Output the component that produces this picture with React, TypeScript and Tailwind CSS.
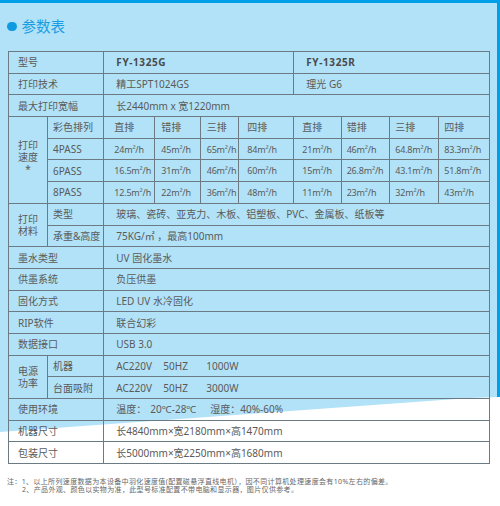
const speedHead = ['直排', '错排', '三排', '四排', '直排', '错排', '三排', '四排']

const speedRows = [
  { pass: '4PASS', v: ['24', '45', '65', '84', '21', '46', '64.8', '83.3'] },
  { pass: '6PASS', v: ['16.5', '31', '46', '60', '15', '26.8', '43.1', '51.8'] },
  { pass: '8PASS', v: ['12.5', '22', '36', '48', '11', '23', '32', '43'] },
]

// left padding per speed column, measured from the reference
const padCls = ['pl-[10px]', 'pl-[6px]', 'pl-[6px]', 'pl-[8px]', 'pl-[8px]', 'pl-[5px]', 'pl-[5px]', 'pl-[5px]']

const simpleRows: [string, React.ReactNode][] = [
  ['墨水类型', 'UV 固化墨水'],
  ['供墨系统', '负压供墨'],
  ['固化方式', 'LED UV 水冷固化'],
  ['RIP软件', '联合幻彩'],
  ['数据接口', 'USB 3.0'],
]

const bd = 'border border-[#6c7a84]'
const rowH = 'h-[21.7px]'

function Label({ children, span = 2 }: { children: React.ReactNode; span?: number }) {
  return (
    <td colSpan={span} className={`${bd} ${rowH} pl-[9px] p-0 align-middle`}>
      {children}
    </td>
  )
}

function Value({ children, span = 8, bold = false }: { children: React.ReactNode; span?: number; bold?: boolean }) {
  return (
    <td colSpan={span} className={`${bd} ${rowH} pl-[12px] p-0 align-middle ${bold ? 'font-bold tracking-[0.6px] text-[#4a4a4a]' : ''}`}>
      {children}
    </td>
  )
}

function Stack({ lines }: { lines: string[] }) {
  return (
    <div className="flex flex-col items-center leading-[12px]">
      {lines.map((l, i) => (
        <span key={i}>{l}</span>
      ))}
    </div>
  )
}

function Power({ w }: { w: string }) {
  return (
    <>
      <span className="inline-block w-[47px]">AC220V</span>
      <span className="inline-block w-[43px]">50HZ</span>
      <span>{w}</span>
    </>
  )
}

export default function App() {
  return (
    <div className="relative h-[506px] w-[500px] overflow-hidden bg-white font-['Noto_Sans','Noto_Sans_CJK_SC',sans-serif] text-[#5a5a5a]">
      {/* background: light blue panel with slanted bottom edge, blue frame bars */}
      <svg className="absolute inset-0" width="500" height="506" aria-hidden>
        <polygon points="0,0 500,0 500,397 470,398 0,432" fill="#b2e2f7" />
        <rect x="0" y="0" width="500" height="3" fill="#00a0e9" />
        <rect x="497" y="0" width="3" height="397" fill="#00a0e9" />
      </svg>

      <div className="relative">
        <div className="flex h-[51px] items-start gap-[5px] pl-[7px] pt-[19px]">
          <span className="mt-[2.5px] h-[9.5px] w-[9.5px] rounded-full bg-[#0f9be2]" />
          <span className="text-[14.5px] leading-[15px] text-[#1a9de2]">参数表</span>
        </div>

        <table className="ml-[8px] w-[481.3px] table-fixed border-collapse text-[10px] leading-none">
          <colgroup>
            <col className="w-[39px]" />
            <col className="w-[56.3px]" />
            <col className="w-[51px]" />
            <col className="w-[45.4px]" />
            <col className="w-[38.6px]" />
            <col className="w-[55px]" />
            <col className="w-[47.4px]" />
            <col className="w-[48.6px]" />
            <col className="w-[49px]" />
            <col className="w-[51px]" />
          </colgroup>
          <tbody>
            <tr>
              <Label>型号</Label>
              <Value span={4} bold>FY-1325G</Value>
              <Value span={4} bold>FY-1325R</Value>
            </tr>
            <tr>
              <Label>打印技术</Label>
              <Value span={4}>精工SPT1024GS</Value>
              <Value span={4}>理光 G6</Value>
            </tr>
            <tr>
              <Label>最大打印宽幅</Label>
              <Value>长2440mm x 宽1220mm</Value>
            </tr>

            <tr>
              <td rowSpan={4} className={`${bd} p-0 pb-[6px] align-middle`}>
                <Stack lines={['打印', '速度', '*']} />
              </td>
              <td className={`${bd} ${rowH} p-0 pl-[5px]`}>彩色排列</td>
              {speedHead.map((h, i) => (
                <td key={i} className={`${bd} ${rowH} p-0 ${padCls[i]}`}>{h}</td>
              ))}
            </tr>
            {speedRows.map((r) => (
              <tr key={r.pass}>
                <td className={`${bd} ${rowH} p-0 pl-[5px]`}>{r.pass}</td>
                {r.v.map((v, i) => (
                  <td key={i} className={`${bd} ${rowH} p-0 text-[9px] tracking-[-0.2px] ${padCls[i]}`}>
                    {v}m²/h
                  </td>
                ))}
              </tr>
            ))}

            <tr>
              <td rowSpan={2} className={`${bd} p-0 align-middle`}>
                <Stack lines={['打印', '材料']} />
              </td>
              <td className={`${bd} ${rowH} p-0 pl-[5px]`}>类型</td>
              <Value>玻璃、瓷砖、亚克力、木板、铝塑板、PVC、金属板、纸板等</Value>
            </tr>
            <tr>
              <td className={`${bd} ${rowH} p-0 pl-[5px]`}>承重&amp;高度</td>
              <Value>75KG/㎡ ，最高100mm</Value>
            </tr>

            {simpleRows.map(([k, v]) => (
              <tr key={k}>
                <Label>{k}</Label>
                <Value>{v}</Value>
              </tr>
            ))}

            <tr>
              <td rowSpan={2} className={`${bd} p-0 align-middle`}>
                <Stack lines={['电源', '功率']} />
              </td>
              <td className={`${bd} ${rowH} p-0 pl-[5px]`}>机器</td>
              <Value><Power w="1000W" /></Value>
            </tr>
            <tr>
              <td className={`${bd} ${rowH} p-0 pl-[5px]`}>台面吸附</td>
              <Value><Power w="3000W" /></Value>
            </tr>

            <tr>
              <Label>使用环境</Label>
              <Value>
                <span className="inline-block w-[34px]">温度：</span>
                <span className="inline-block w-[60px]">20℃-28℃</span>
                <span>湿度：40%-60%</span>
              </Value>
            </tr>
            <tr>
              <Label>机器尺寸</Label>
              <Value>长4840mm×宽2180mm×高1470mm</Value>
            </tr>
            <tr>
              <Label>包装尺寸</Label>
              <Value>长5000mm×宽2250mm×高1680mm</Value>
            </tr>
          </tbody>
        </table>

        <div className="mt-[14px] pl-[7px] text-[7px] leading-[7.5px] tracking-[0.35px] text-[#666]">
          <p>注：1、以上所列速度数据为本设备中羽化速度值(配置磁悬浮直线电机），因不同计算机处理速度会有10%左右的偏差。</p>
          <p className="pl-[15px]">2、产品外观、颜色以实物为准，此型号标准配置不带电脑和显示器，图片仅供参考。</p>
        </div>
      </div>
    </div>
  )
}
